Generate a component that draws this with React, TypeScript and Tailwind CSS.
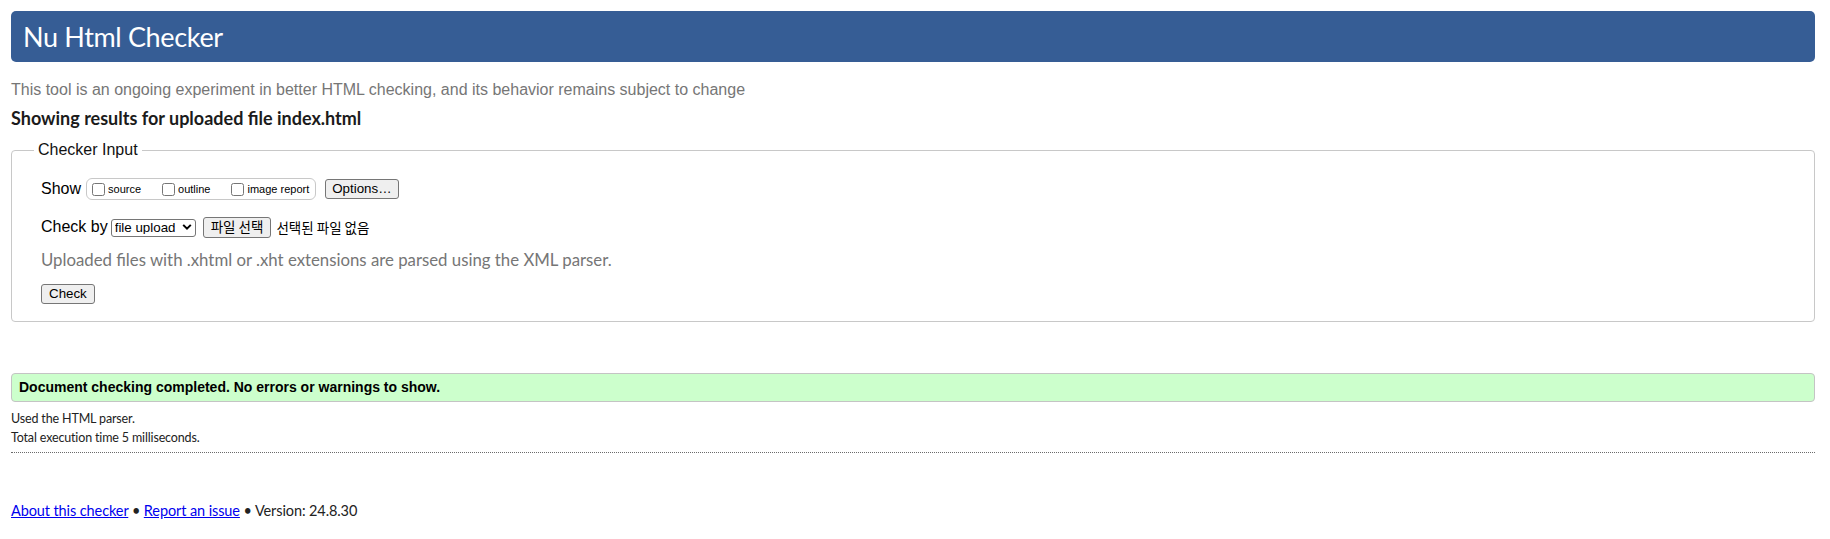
import React from "react";

function Chevron() {
  return (
    <svg width="10" height="7" viewBox="0 0 10 7" className="pointer-events-none absolute right-[4px] top-1/2 -translate-y-1/2">
      <path d="M1.2 1.4 L5 5.2 L8.8 1.4" fill="none" stroke="#000" strokeWidth="2" />
    </svg>
  );
}

export default function App() {
  return (
    <div className="min-h-[539px] bg-white pl-[11px] pr-[15px] pt-[11px] font-['Liberation_Sans',Arial,sans-serif] text-black">
      <header className="flex h-[51px] items-center rounded-[5px] bg-[#365d95] pl-[12px]">
        <h1 className="font-['Lato',sans-serif] text-[27px] leading-none tracking-[-0.35px] text-white">Nu Html Checker</h1>
      </header>

      <p className="mt-[18px] text-[16px] leading-[20px] text-[#767676]">
        This tool is an ongoing experiment in better HTML checking, and its behavior remains subject to change
      </p>
      <p className="mt-[8px] font-['Lato',sans-serif] text-[18px] font-bold leading-[20px] text-[#1b1b1b]">
        Showing results for uploaded file index.html
      </p>

      <fieldset className="mt-[13px] rounded-[4px] border border-[#c8c8c8] px-[22px] pb-[16px] pt-[19px]">
        <legend className="px-[4px] text-[16px] leading-[18px] text-[#111]">Checker Input</legend>
        <div className="pl-[7px]">
          <div className="flex h-[22px] items-center">
            <span className="text-[16px]">Show</span>
            <div className="ml-[5px] flex h-[22px] items-center gap-[21px] rounded-[6px] border border-[#c8c8c8] pl-[5px] pr-[6px]">
              <label className="flex items-center">
                <input type="checkbox" className="m-0 h-[13px] w-[13px]" />
                <span className="ml-[3px] text-[11px]">source</span>
              </label>
              <label className="flex items-center">
                <input type="checkbox" className="m-0 h-[13px] w-[13px]" />
                <span className="ml-[3px] text-[11px]">outline</span>
              </label>
              <label className="flex items-center">
                <input type="checkbox" className="m-0 h-[13px] w-[13px]" />
                <span className="ml-[3px] text-[11px]">image report</span>
              </label>
            </div>
            <button className="ml-[9px] h-[20px] rounded-[3px] border border-[#767676] bg-[#efefef] px-[6px] text-[13.33px] leading-none">
              Options…
            </button>
          </div>

          <div className="mt-[17px] flex h-[20px] items-center">
            <span className="text-[16px]">Check by</span>
            <div className="relative ml-[3px]">
              <select className="h-[18px] w-[85px] appearance-none rounded-[3px] border border-[#767676] bg-white pl-[3px] text-[13.33px] leading-none">
                <option>file upload</option>
              </select>
              <Chevron />
            </div>
            <button className="ml-[7px] h-[21px] rounded-[3px] border border-[#767676] bg-[#efefef] px-[7px] font-['Noto_Sans_CJK_KR',sans-serif] text-[13.5px] leading-none">
              파일 선택
            </button>
            <span className="ml-[5px] font-['Noto_Sans_CJK_KR',sans-serif] text-[13.5px]">선택된 파일 없음</span>
          </div>

          <p className="mt-[12px] font-['Lato',sans-serif] text-[16.8px] leading-[22px] text-[#767676]">
            Uploaded files with .xhtml or .xht extensions are parsed using the XML parser.
          </p>

          <button className="mt-[13px] h-[20px] rounded-[3px] border border-[#767676] bg-[#efefef] px-[7px] text-[13.33px] leading-none">
            Check
          </button>
        </div>
      </fieldset>

      <div className="mt-[51px] flex h-[29px] items-center rounded-[4px] border border-[#c4c4c4] bg-[#ccffcc] pl-[7px]">
        <p className="text-[14px] font-bold">Document checking completed. No errors or warnings to show.</p>
      </div>

      <div className="mt-[7px] border-b border-dotted border-[#6b6b6b] pb-[5px] font-['Lato',sans-serif] text-[12.5px] leading-[19px] tracking-[-0.15px] text-[#222]">
        <p>Used the HTML parser.</p>
        <p>Total execution time 5 milliseconds.</p>
      </div>

      <p className="mt-[48px] font-['Lato',sans-serif] text-[14.5px] leading-[20px] tracking-[-0.1px] text-[#222]">
        <a href="#" className="text-[#0000ee] underline">About this checker</a>
        {" • "}
        <a href="#" className="text-[#0000ee] underline">Report an issue</a>
        {" • Version: 24.8.30"}
      </p>
    </div>
  );
}
